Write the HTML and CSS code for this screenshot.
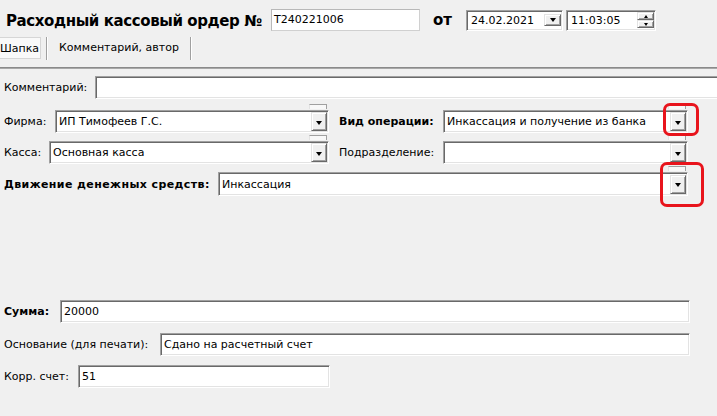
FILE: index.html
```html
<!DOCTYPE html>
<html lang="ru">
<head>
<meta charset="utf-8">
<title>Расходный кассовый ордер</title>
<link rel="stylesheet" href="styles.css">
</head>
<body>
<div class="header">
  <div class="title">Расходный кассовый ордер №</div>
  <div class="num">T240221006</div>
  <div class="ot">от</div>
  <div class="date sunk">
    <span class="dval">24.02.2021</span>
    <span class="dbtn raised"><span class="tri"></span></span>
  </div>
  <div class="time sunk">
    <span class="dval">11:03:05</span>
    <span class="spin">
      <span class="sbtn raised"><span class="tri-up"></span></span>
      <span class="sbtn raised"><span class="tri-sm"></span></span>
    </span>
  </div>
</div>

<div class="tabs">
  <div class="tab active">Шапка</div>
  <div class="sep"></div>
  <div class="tab plain">Комментарий, автор</div>
  <div class="sep"></div>
</div>
<div class="divider"></div>

<div class="form">
  <div class="row r-comment">
    <span class="lbl w-comment">Комментарий:</span>
    <div class="edit sunk wide"></div>
  </div>

  <div class="row r-firma">
    <div class="cell left">
      <span class="lbl w-firma">Фирма:</span>
      <div class="combo sunk c-firma"><span class="val">ИП Тимофеев Г.С.</span><span class="cbtn raised"><span class="tri"></span></span></div>
    </div>
    <div class="cell right">
      <span class="lbl b w-right">Вид операции:</span>
      <div class="combo sunk c-right"><span class="val">Инкассация и получение из банка</span><span class="cbtn raised"><span class="tri"></span></span></div>
    </div>
  </div>

  <div class="row r-kassa">
    <div class="cell left">
      <span class="lbl w-kassa">Касса:</span>
      <div class="combo sunk c-kassa"><span class="val">Основная касса</span><span class="cbtn raised"><span class="tri"></span></span></div>
    </div>
    <div class="cell right">
      <span class="lbl w-right">Подразделение:</span>
      <div class="combo sunk c-right"><span class="val"></span><span class="cbtn raised"><span class="tri"></span></span></div>
    </div>
  </div>

  <div class="row r-dvizh">
    <span class="lbl b wide-bold w-dvizh">Движение денежных средств:</span>
    <div class="combo sunk c-dvizh"><span class="val">Инкассация</span><span class="cbtn raised"><span class="tri"></span></span></div>
  </div>

  <div class="row r-summa">
    <span class="lbl b w-summa">Сумма:</span>
    <div class="edit sunk e-summa">20000</div>
  </div>

  <div class="row r-osn">
    <span class="lbl w-osn">Основание (для печати):</span>
    <div class="edit sunk e-osn">Сдано на расчетный счет</div>
  </div>

  <div class="row r-korr">
    <span class="lbl w-korr">Корр. счет:</span>
    <div class="edit sunk e-korr">51</div>
  </div>
</div>

<div class="mark m1"></div>
<div class="mark m2"></div>
</body>
</html>
```

FILE: styles.css
```css
* { box-sizing: border-box; }

html, body {
  margin: 0;
  padding: 0;
}

body {
  position: relative;
  width: 717px;
  height: 416px;
  overflow: hidden;
  background: #f0f0f0;
  font-family: "DejaVu Sans", "Noto Sans", sans-serif;
  font-size: 11px;
  color: #000;
}

/* ---------- header ---------- */
.header {
  display: flex;
  align-items: center;
  height: 22px;
  margin-top: 9px;
  padding-left: 6px;
}

.title {
  width: 265px;
  font-size: 15px;
  font-weight: bold;
  letter-spacing: -0.4px;
  white-space: nowrap;
  padding-top: 2px;
}

.num {
  width: 149px;
  height: 22px;
  background: #fff;
  border: 1px solid #d0d0d0;
  border-top-color: #b8b8b8;
  border-left-color: #b8b8b8;
  padding-left: 2px;
  line-height: 20px;
}

.ot {
  width: 46px;
  padding-left: 13px;
  font-size: 15px;
  font-weight: bold;
}

.sunk {
  background: #fff;
  border: 1px solid;
  border-color: #a0a0a0 #ffffff #ffffff #a0a0a0;
  box-shadow: inset 1px 1px 0 #696969, inset -1px -1px 0 #e3e3e3;
}

.raised {
  background: #f0f0f0;
  border: 1px solid;
  border-color: #e3e3e3 #696969 #696969 #e3e3e3;
  box-shadow: inset 1px 1px 0 #ffffff, inset -1px -1px 0 #a0a0a0;
  display: flex;
  align-items: center;
  justify-content: center;
}

.date, .time {
  display: flex;
  align-items: center;
  height: 21px;
  padding-left: 4px;
}

.date { width: 97px; }
.time { width: 90px; margin-left: 3px; }

.dval { flex: 1; white-space: nowrap; }

.dbtn {
  width: 17px;
  height: 12px;
  margin-right: 1px;
}

.spin {
  display: flex;
  flex-direction: column;
  width: 17px;
  margin-right: 1px;
}

.sbtn { height: 8px; }

.tri {
  width: 0;
  height: 0;
  border-left: 3.5px solid transparent;
  border-right: 3.5px solid transparent;
  border-top: 4px solid #000;
}

.tri-sm {
  width: 0;
  height: 0;
  border-left: 2.5px solid transparent;
  border-right: 2.5px solid transparent;
  border-top: 3px solid #000;
}

.tri-up {
  width: 0;
  height: 0;
  border-left: 2.5px solid transparent;
  border-right: 2.5px solid transparent;
  border-bottom: 3px solid #000;
}

/* ---------- tabs ---------- */
.tabs {
  display: flex;
  height: 23px;
  margin-top: 6px;
}

.tab {
  line-height: 21px;
  white-space: nowrap;
}

.tab.active {
  width: 42px;
  margin-left: -1px;
  padding-left: 0;
  height: 22px;
  background: #f9f9f9;
  border: 1px solid #d6d6d6;
}

.tab.plain {
  padding: 0 11px 0 11px;
}

.sep {
  width: 2px;
  margin-left: 5px;
  border-left: 1px solid #a0a0a0;
  border-right: 1px solid #ffffff;
}

.tab.plain + .sep { margin-left: 0; }

.divider {
  margin-top: 7px;
  height: 2px;
  border-top: 1px solid #8a8a8a;
  border-bottom: 1px solid #a8a8a8;
}

/* ---------- form ---------- */
.form { padding-left: 4px; }

.row {
  display: flex;
  align-items: center;
  height: 23px;
}

.cell {
  display: flex;
  align-items: center;
  height: 23px;
}

.cell.left { width: 335px; }

.lbl { white-space: nowrap; flex: none; }
.lbl.b { font-weight: bold; }
.lbl.wide-bold { letter-spacing: 0.4px; }

.edit, .combo {
  height: 23px;
  padding-left: 3px;
  display: flex;
  align-items: center;
  white-space: nowrap;
  flex: none;
}

.combo { position: relative; padding-right: 1px; }
.combo .val { flex: 1; }

.cbtn {
  width: 16px;
  height: 19px;
  padding-top: 2px;
}

/* little leftover strip above each combo button */
.combo::before {
  content: "";
  position: absolute;
  right: 1px;
  top: -7px;
  width: 16px;
  height: 4px;
  background: #f8f8f8;
  border-top: 1px solid #a0a0a0;
  border-left: 1px solid #e3e3e3;
  border-right: 1px solid #a0a0a0;
}

.r-comment { margin-top: 7px; }
.w-comment { width: 91px; }
.wide {
  width: 622px;
  border-right: 0;
  box-shadow: inset 1px 1px 0 #696969, inset 0 -1px 0 #e3e3e3;
}

.r-firma { margin-top: 11px; }
.w-firma { width: 51px; }
.c-firma { width: 274px; }

.w-right { width: 104px; }
.c-right { width: 245px; }

.r-kassa { margin-top: 8px; }
.w-kassa { width: 45px; }
.c-kassa { width: 280px; }

.r-dvizh { margin-top: 8px; height: 24px; }
.w-dvizh { width: 214px; }
.c-dvizh { width: 470px; height: 24px; }

.r-summa { margin-top: 104px; }
.w-summa { width: 56px; }
.e-summa { width: 630px; }

.r-osn { margin-top: 10px; }
.w-osn { width: 156px; }
.e-osn { width: 530px; }

.r-korr { margin-top: 9px; }
.w-korr { width: 74px; }
.e-korr { width: 252px; }

/* ---------- red annotation marks ---------- */
.mark {
  position: absolute;
  border: 3px solid #e8141c;
  border-radius: 7px;
}

.m1 { left: 663px; top: 103px; width: 36px; height: 33px; }
.m2 { left: 660px; top: 162px; width: 44px; height: 45px; }
```
